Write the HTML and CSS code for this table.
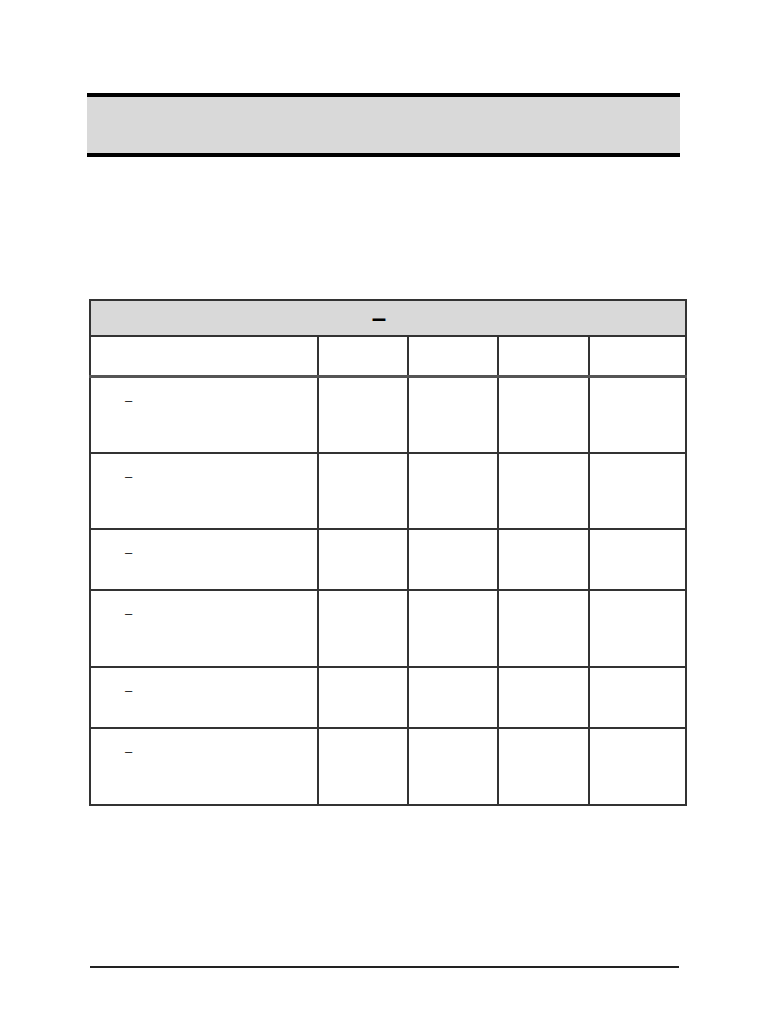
FILE: index.html
```html
<!DOCTYPE html>
<html lang="en">
<head>
<meta charset="utf-8">
<title>Document page</title>
<link rel="stylesheet" href="styles.css">
</head>
<body>
<div class="page">
  <div class="banner"></div>
  <table class="grid">
    <colgroup>
      <col class="c1"><col class="c2"><col class="c3"><col class="c4"><col class="c5">
    </colgroup>
    <thead>
      <tr class="title-row"><th colspan="5"><span class="title-text">–</span></th></tr>
      <tr class="head-row"><th></th><th></th><th></th><th></th><th></th></tr>
    </thead>
    <tbody>
      <tr class="tall lead"><td><div class="label">–</div></td><td></td><td></td><td></td><td></td></tr>
      <tr class="tall lead"><td><div class="label">–</div></td><td></td><td></td><td></td><td></td></tr>
      <tr class="short"><td><div class="label">–</div></td><td></td><td></td><td></td><td></td></tr>
      <tr class="tall"><td><div class="label">–</div></td><td></td><td></td><td></td><td></td></tr>
      <tr class="short"><td><div class="label">–</div></td><td></td><td></td><td></td><td></td></tr>
      <tr class="tall"><td><div class="label">–</div></td><td></td><td></td><td></td><td></td></tr>
    </tbody>
  </table>
  <div class="footer-rule"></div>
</div>
</body>
</html>
```
FILE: styles.css
```css
html, body {
  margin: 0;
  padding: 0;
  background: #ffffff;
}
body {
  font-family: "Liberation Sans", Arial, sans-serif;
  color: #000;
}
.page {
  width: 768px;
  min-height: 1024px;
  padding-top: 93px;
  box-sizing: border-box;
}
.banner {
  margin-left: 87px;
  width: 593px;
  height: 56px;
  background: #d9d9d9;
  border-top: 4px solid #000;
  border-bottom: 4px solid #000;
}
.grid {
  margin-top: 142px;
  margin-left: 89px;
  width: 596px;
  border-collapse: collapse;
  table-layout: fixed;
  border: 2px solid #333;
}
.c1 { width: 228px; }
.c2 { width: 90px; }
.c3 { width: 90px; }
.c4 { width: 91px; }
.c5 { width: 97px; }
.grid th, .grid td {
  border: 2px solid #333;
  padding: 0;
  vertical-align: top;
}
.title-row th {
  height: 34px;
  background: #d9d9d9;
  vertical-align: middle;
  text-align: center;
  padding-right: 18px;
}
.title-text {
  font-size: 26px;
  font-weight: bold;
  line-height: 30px;
}
.head-row th {
  height: 38px;
  border-bottom: 3px solid #555;
}
.tall td { height: 75px; }
.tall.lead td { height: 74px; }
.short td { height: 59px; }
.label {
  font-size: 13px;
  line-height: 16px;
  padding-top: 15px;
  padding-left: 34px;
  color: #222;
}
.footer-rule {
  margin-top: 160px;
  margin-left: 90px;
  width: 589px;
  height: 0;
  border-top: 2px solid #222;
}
```
